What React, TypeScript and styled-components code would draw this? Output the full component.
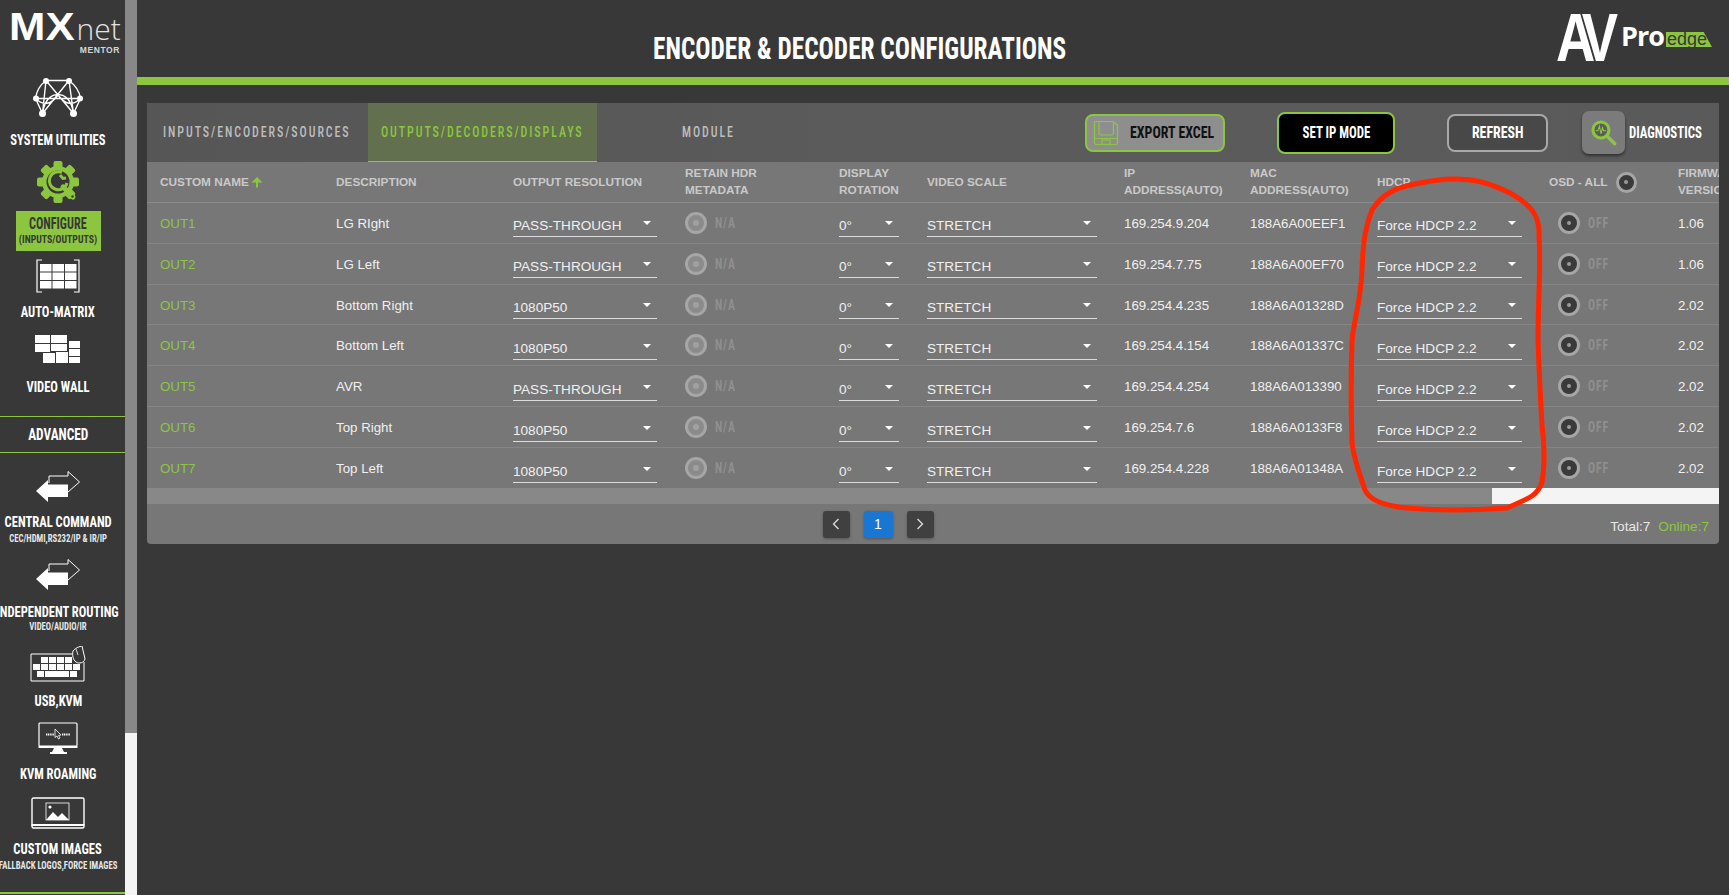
import { FC } from 'react';
import styled, { createGlobalStyle, css } from 'styled-components';

const GREEN = '#8cc63f';

const cond = css`
  font-family: Roboto, "Liberation Sans", sans-serif;
  font-stretch: 75%;
  font-weight: 700;
`;

const Global = createGlobalStyle`
  html, body { margin: 0; padding: 0; height: 100%; background: #383838; overflow: hidden; }
  body { font-family: "Liberation Sans", Arial, sans-serif; }
`;

const Page = styled.div`
  position: relative;
  display: flex;
  width: 1729px;
  height: 895px;
  overflow: hidden;
  background: #383838;
`;

const Sidebar = styled.nav`
  width: 125px;
  height: 895px;
  flex: none;
  overflow: hidden;
  display: flex;
  flex-direction: column;
`;

const ScrollTrack = styled.div`
  width: 12px;
  flex: none;
  background: #f4f4f4;
`;

const ScrollThumb = styled.div`
  height: 733px;
  background: #888888;
`;

const LogoBox = styled.div`
  height: 78px;
  flex: none;
  padding: 9px 0 0 9px;
  box-sizing: border-box;
  color: #fff;
`;

const LogoLine = styled.div`
  display: flex;
  align-items: baseline;
  line-height: 36px;
  height: 36px;
`;

const LogoMx = styled.span`
  font-size: 39px;
  font-weight: 700;
  display: inline-block;
  transform: scaleX(1.12);
  transform-origin: left;
  margin-right: 9px;
`;

const LogoNet = styled.span`
  font-family: "Open Sans", "Liberation Sans", sans-serif;
  font-weight: 300;
  font-size: 30px;
  line-height: 30px;
  color: #e2e2e2;
`;

const LogoSub = styled.div`
  font-size: 8.5px;
  font-weight: 700;
  letter-spacing: 0.6px;
  color: #d6d6d6;
  text-align: right;
  width: 111px;
  line-height: 8px;
  margin-top: 1px;
`;

const NavItem = styled.div<{ $top: number; $gap: number }>`
  display: flex;
  flex-direction: column;
  align-items: center;
  width: 116px;
  flex: none;
  margin-top: ${(p) => p.$top}px;
  row-gap: ${(p) => p.$gap}px;
`;

const NavText = styled.div`
  display: flex;
  flex-direction: column;
  align-items: center;
`;

const NavLabel = styled.div`
  ${cond}
  font-size: 15.5px;
  line-height: 16px;
  height: 16px;
  color: #fff;
  white-space: nowrap;
  transform: scaleX(0.81);
`;

const NavSub = styled.div<{ $mt: number }>`
  ${cond}
  font-size: 10px;
  line-height: 12px;
  color: #e6e6e6;
  white-space: nowrap;
  margin-top: ${(p) => p.$mt}px;
  transform: scaleX(0.87);
`;

const ConfigureBox = styled.div`
  ${cond}
  width: 85px;
  height: 40px;
  margin-top: 8px;
  background: ${GREEN};
  color: #383838;
  display: flex;
  flex-direction: column;
  align-items: center;
`;

const ConfigureTitle = styled.div`
  font-size: 16px;
  line-height: 16px;
  margin-top: 5px;
  transform: scaleX(0.76);
`;

const ConfigureSub = styled.div`
  font-size: 11px;
  line-height: 13px;
  margin-top: 1px;
  white-space: nowrap;
  transform: scaleX(0.89);
`;

const SectionHead = styled.div`
  flex: none;
  height: 37px;
  margin-top: 21px;
  box-sizing: border-box;
  border-top: 1px solid ${GREEN};
  border-bottom: 1px solid ${GREEN};
  display: flex;
  align-items: center;
  justify-content: center;
  padding-right: 9px;
`;

const SectionLabel = styled.span`
  ${cond}
  font-size: 16px;
  color: #fff;
  transform: scaleX(0.83);
`;

const EndLine = styled.div`
  flex: none;
  height: 2px;
  margin-top: 20px;
  background: ${GREEN};
`;

const Main = styled.main`
  flex: 1;
  min-width: 0;
  display: flex;
  flex-direction: column;
`;

const Header = styled.header`
  height: 77px;
  flex: none;
  display: flex;
  align-items: flex-start;
  justify-content: space-between;
  padding: 0 17px 0 516px;
`;

const Title = styled.h1`
  ${cond}
  margin: 29px 0 0;
  width: 415px;
  font-size: 32px;
  line-height: 38px;
  color: #fff;
  white-space: nowrap;
  transform: scaleX(0.79);
  transform-origin: left;
`;

const BrandLogo = styled.div`
  display: flex;
  align-items: flex-end;
  margin-top: 11px;
  height: 52px;
  color: #fff;
`;

const BrandAv = styled.span`
  font-family: "Liberation Sans", sans-serif;
  font-weight: 700;
  font-size: 68px;
  line-height: 52px;
  letter-spacing: -12px;
  width: 60px;
  margin-right: 5px;
  flex: none;
  transform: scaleX(0.8);
  transform-origin: left;
`;

const BrandPro = styled.span`
  font-family: "Open Sans", "Liberation Sans", sans-serif;
  font-weight: 700;
  font-size: 27px;
  line-height: 30px;
  letter-spacing: -1px;
  margin: 0 0 12px;
`;

const BrandEdge = styled.span`
  font-family: "Liberation Sans", sans-serif;
  font-size: 18px;
  line-height: 14px;
  height: 15px;
  width: 46px;
  margin: 0 0 16px 2px;
  padding-left: 1px;
  box-sizing: border-box;
  color: #383838;
  background: ${GREEN};
  clip-path: polygon(0 0, 82% 0, 100% 100%, 0 100%);
  overflow: hidden;
`;

const GreenBar = styled.div`
  height: 8px;
  flex: none;
  background: ${GREEN};
`;

const Panel = styled.section`
  margin: 18px 10px 0;
  height: 441px;
  display: flex;
  flex-direction: column;
  background: #777777;
  border-radius: 0 0 4px 4px;
  overflow: hidden;
`;

const TabBar = styled.div`
  height: 59px;
  flex: none;
  display: flex;
  align-items: stretch;
  background: linear-gradient(90deg, #565656, #5b5b5b 50%, #5a5a5a);
`;

const Tab = styled.div<{ $active?: boolean; $w: number; $pl: number }>`
  width: ${(p) => p.$w}px;
  flex: none;
  box-sizing: border-box;
  padding-left: ${(p) => p.$pl}px;
  display: flex;
  align-items: center;
  color: ${(p) => (p.$active ? GREEN : '#bdbdbd')};
  background: ${(p) => (p.$active ? '#63704f' : 'transparent')};
  border-bottom: 1px solid ${(p) => (p.$active ? GREEN : 'transparent')};
`;

const TabLabel = styled.span`
  ${cond}
  font-size: 15.5px;
  font-weight: 500;
  letter-spacing: 2.5px;
  white-space: nowrap;
  transform: scaleX(0.77);
  transform-origin: left;
`;

const Actions = styled.div`
  margin-left: auto;
  padding-right: 18px;
  display: flex;
  align-items: center;
  gap: 52px;
`;

const ActionButton = styled.button<{ $kind: 'export' | 'ip' | 'refresh' }>`
  box-sizing: border-box;
  display: flex;
  align-items: center;
  justify-content: ${(p) => (p.$kind === 'export' ? 'flex-start' : 'center')};
  padding: 0 0 0 ${(p) => (p.$kind === 'export' ? 6 : 0)}px;
  border-radius: 8px;
  border: 2px solid ${(p) => (p.$kind === 'refresh' ? '#a8a8a8' : GREEN)};
  width: ${(p) => (p.$kind === 'export' ? 140 : p.$kind === 'ip' ? 118 : 101)}px;
  height: ${(p) => (p.$kind === 'ip' ? 42 : 38)}px;
  color: ${(p) => (p.$kind === 'export' ? '#111' : '#fff')};
  background: ${(p) => (p.$kind === 'export' ? '#8e8e8e' : p.$kind === 'ip' ? '#000' : '#484848')};
  column-gap: 11px;
`;

const ButtonLabel = styled.span<{ $k: number; $left?: boolean }>`
  ${cond}
  flex: none;
  font-size: 16.5px;
  white-space: nowrap;
  transform: scaleX(${(p) => p.$k});
  transform-origin: ${(p) => (p.$left ? 'left' : 'center')};
`;

const DiskSvg = styled.svg`
  flex: none;
`;

const Diagnostics = styled.div`
  display: flex;
  align-items: center;
  column-gap: 4px;
  margin-left: -18px;
`;

const DiagnosticsLabel = styled.span`
  ${cond}
  width: 72px;
  font-size: 16px;
  color: #fff;
  white-space: nowrap;
  transform: scaleX(0.8);
  transform-origin: left;
`;

const DiagnosticsIcon = styled.div`
  width: 43px;
  height: 43px;
  border-radius: 7px;
  background: #7b7b7b;
  box-shadow: 0 2px 3px rgba(0, 0, 0, 0.45);
  display: flex;
  align-items: center;
  justify-content: center;
`;

const TableWrap = styled.div`
  flex: none;
  overflow: hidden;
`;

const cols = '176px 177px 172px 154px 88px 197px 126px 127px 172px 129px 100px';

const HeadRow = styled.div`
  display: grid;
  grid-template-columns: ${cols};
  height: 41px;
  box-sizing: border-box;
  padding-left: 13px;
  align-items: center;
  border-bottom: 1px solid #8a8a8a;
  width: 1700px;
`;

const HeadCell = styled.div`
  font-size: 11.8px;
  font-weight: 700;
  line-height: 17px;
  color: #c9c9c9;
  display: flex;
  align-items: center;
`;

const HeadStack = styled.div`
  font-size: 11.8px;
  font-weight: 700;
  line-height: 17px;
  color: #c9c9c9;
  white-space: nowrap;
`;

const Row = styled.div`
  display: grid;
  grid-template-columns: ${cols};
  height: 40.83px;
  box-sizing: border-box;
  padding-left: 13px;
  align-items: center;
  border-bottom: 1px solid #858585;
  width: 1700px;
  &:last-child { border-bottom: 0; }
`;

const Cell = styled.div<{ $green?: boolean }>`
  font-size: 13.3px;
  color: ${(p) => (p.$green ? GREEN : '#f0f0f0')};
  white-space: nowrap;
  margin-top: 1px;
`;

const Select = styled.div<{ $w: number }>`
  width: ${(p) => p.$w}px;
  height: 24px;
  margin-top: 5px;
  box-sizing: border-box;
  border-bottom: 1px solid #dcdcdc;
  display: flex;
  align-items: center;
  justify-content: space-between;
  padding: 2px 6px 0 0;
  font-size: 13.6px;
  color: #f0f0f0;
  white-space: nowrap;
`;

const Caret = styled.span`
  width: 0;
  height: 0;
  margin-top: -5px;
  border-left: 4.5px solid transparent;
  border-right: 4.5px solid transparent;
  border-top: 4.5px solid #fff;
`;

const RadioWrap = styled.div<{ $pl?: number }>`
  display: flex;
  align-items: center;
  column-gap: 8px;
  padding-left: ${(p) => p.$pl ?? 0}px;
`;

const Radio = styled.span<{ $off?: boolean }>`
  width: 22px;
  height: 22px;
  box-sizing: border-box;
  border-radius: 50%;
  border: 3px solid #a6a6a6;
  background: ${(p) => (p.$off ? '#8b8b8b' : '#3a3a3a')};
  display: flex;
  align-items: center;
  justify-content: center;
  flex: none;
  &::after {
    content: '';
    width: ${(p) => (p.$off ? 6 : 4)}px;
    height: ${(p) => (p.$off ? 6 : 4)}px;
    border-radius: 50%;
    background: ${(p) => (p.$off ? '#a0a0a0' : '#9a9a9a')};
  }
`;

const HeadRadio = styled(Radio)`
  width: 21px;
  height: 21px;
  margin-left: 8px;
`;

const RadioText = styled.span`
  ${cond}
  font-size: 15.5px;
  letter-spacing: 1.2px;
  color: #8f8f8f;
  transform: scaleX(0.76);
  transform-origin: left;
`;

const ScrollStrip = styled.div`
  flex: none;
  height: 16px;
  background: #f4f4f4;
  margin-top: -1px;
`;

const ScrollStripThumb = styled.div`
  width: 1345px;
  height: 16px;
  background: #888888;
`;

const Footer = styled.div`
  flex: 1;
  position: relative;
  display: flex;
  align-items: flex-start;
  justify-content: center;
  padding: 7px 110px 0 0;
  column-gap: 14px;
`;

const PageBtn = styled.div<{ $active?: boolean }>`
  width: ${(p) => (p.$active ? 29 : 27)}px;
  height: 27px;
  border-radius: 3px;
  background: ${(p) => (p.$active ? '#1976d2' : '#404040')};
  color: #fff;
  font-size: 14px;
  display: flex;
  align-items: center;
  justify-content: center;
  box-shadow: 0 1px 3px rgba(0, 0, 0, 0.3);
`;

const FooterTotals = styled.div`
  position: absolute;
  right: 10px;
  top: 15px;
  font-size: 13.6px;
  color: #e8e8e8;
  display: flex;
  column-gap: 8px;
`;

const GreenText = styled.span`
  color: ${GREEN};
`;

const Scribble = styled.svg`
  position: absolute;
  left: 1340px;
  top: 170px;
  pointer-events: none;
`;

const SortSvg = styled.svg`
  margin-left: 2.5px;
`;

const DomeIcon = () => (
  <svg width="50" height="40" viewBox="0 0 50 40" fill="none" stroke="#fff" strokeWidth="1.4">
    <path d="M13 2.5H36M13 2.5C7 7 3.5 13 2.5 20.5M36 2.5C42 7 46.5 13 47.5 20.5M2.5 20.5H47.5M2.5 20.5L9.5 35.5M47.5 20.5L40.5 35.5M13 2.5L40.5 35.5M36 2.5L9.5 35.5M13 2.5L9.5 35.5M36 2.5L40.5 35.5M9.5 35.5C12 18 22 16 25 17C28 16 38 18 40.5 35.5M2.5 20.5C10 28 18 27 25 17M47.5 20.5C40 28 32 27 25 17" />
    <g fill="#fff" stroke="none">
      <circle cx="13" cy="3" r="3" /><circle cx="36" cy="3" r="3" />
      <circle cx="3" cy="20.5" r="3" /><circle cx="47" cy="20.5" r="3" />
      <circle cx="9.5" cy="35.5" r="3.5" /><circle cx="40.5" cy="35.5" r="3.5" />
    </g>
  </svg>
);

const GearIcon = () => (
  <svg width="44" height="42" viewBox="0 0 44 42">
    <g fill={GREEN}>
      {[0, 45, 90, 135, 180, 225, 270, 315].map((a) => (
        <rect key={a} x="17.5" y="0" width="9" height="10" rx="2" transform={`rotate(${a} 22 21)`} />
      ))}
      <circle cx="22" cy="21" r="16" />
    </g>
    <circle cx="22" cy="21" r="11.5" fill="#383838" />
    <path d="M26 11.5A9 9 0 1 0 31 22" fill="none" stroke={GREEN} strokeWidth="3" />
    <path d="M24 14L27 17.5 30 17" fill="none" stroke={GREEN} strokeWidth="3" />
    <path d="M27 26L37 36" stroke={GREEN} strokeWidth="5" strokeLinecap="round" />
    <circle cx="36.5" cy="35.5" r="1.2" fill="#383838" />
  </svg>
);

const MatrixIcon = () => (
  <svg width="44" height="34" viewBox="0 0 44 34">
    <path d="M6 1H1V33H6M38 1H43V33H38" fill="none" stroke="#fff" strokeWidth="1.2" />
    {[0, 1, 2].map((r) =>
      [0, 1, 2].map((c) => <rect key={`${r}${c}`} x={4 + c * 12.5} y={5 + r * 8.5} width="11.5" height="7.5" fill="#fff" />),
    )}
  </svg>
);

const WallIcon = () => (
  <svg width="46" height="30" viewBox="0 0 46 30" fill="#fff">
    <rect x="0" y="0" width="15" height="8" /><rect x="16" y="0" width="16" height="8" />
    <rect x="0" y="9" width="15" height="8" /><rect x="16" y="9" width="16" height="7" />
    <rect x="34" y="6" width="11" height="7" /><rect x="34" y="14" width="11" height="7" />
    <rect x="8" y="18" width="12" height="10" /><rect x="21" y="17" width="12" height="11" /><rect x="34" y="22" width="11" height="6" />
  </svg>
);

const SwapIcon = () => (
  <svg width="46" height="33" viewBox="0 0 46 33">
    <path d="M14 13V6H33V1.5L44.5 12 33 22" fill="none" stroke="#fff" strokeWidth="1" />
    <path d="M1 21L13 10V14.5H33V27H13V32Z" fill="#fff" />
  </svg>
);

const KeyboardIcon = () => (
  <svg width="56" height="36" viewBox="0 0 56 36">
    <path d="M42 8H1V35H54V16" fill="none" stroke="#fff" strokeWidth="1" />
    <g fill="#fff">
      {[11, 19, 27, 35].map((x) => <rect key={x} x={x} y="11" width="7" height="6" />)}
      {[3, 11, 19, 27, 35, 43].map((x) => <rect key={x} x={x} y="18" width="7" height="6" />)}
      <rect x="7" y="25" width="7" height="6" /><rect x="15" y="25" width="24" height="6" /><rect x="40" y="25" width="7" height="6" />
    </g>
    <path d="M43 5C46 1 52 0 52 0L55 13C54 17 49 18 46 16 43 14 42 9 43 5Z" fill="#383838" stroke="#fff" strokeWidth="1" />
    <path d="M46 3L48 9" stroke="#fff" strokeWidth="0.8" />
  </svg>
);

const MonitorIcon = () => (
  <svg width="40" height="32" viewBox="0 0 40 32">
    <rect x="1" y="1" width="38" height="23" rx="1" fill="none" stroke="#fff" strokeWidth="1.2" />
    <path d="M0.5 24H39.5V26H24L26 30H29V32H12V30H14L16 26H0.5Z" fill="#fff" />
    <path d="M8 12.5H16M24 12.5H32" stroke="#fff" strokeWidth="2" strokeDasharray="1.2 0.6" />
    <path d="M17 7V15.5L19 14 20.5 17 22 16 20.5 13.5 23 13Z" fill="#383838" stroke="#fff" strokeWidth="0.8" />
  </svg>
);

const ImageIcon = () => (
  <svg width="54" height="33" viewBox="0 0 54 33">
    <rect x="1" y="1" width="52" height="30" rx="1.5" fill="none" stroke="#fff" strokeWidth="1.4" />
    <rect x="0.5" y="27" width="53" height="2" fill="#fff" />
    <rect x="15" y="6" width="23" height="17" fill="none" stroke="#fff" strokeWidth="0.8" />
    <circle cx="19" cy="10" r="1.6" fill="#fff" />
    <path d="M15 23L22 15 27 20 31 16 38 23Z" fill="#fff" />
  </svg>
);

const DiskIcon = () => (
  <DiskSvg width="26" height="26" viewBox="0 0 26 26" fill="none" stroke={GREEN} strokeWidth="1.2">
    <path d="M2 1.5H20L24.5 5V23C24.5 24 24 24.5 23 24.5H3C2 24.5 1.5 24 1.5 23V2C1.5 1.7 1.7 1.5 2 1.5Z" />
    <path d="M6 1.5V13.5C6 14.5 6.5 15 7.5 15H19C20 15 20.5 14.5 20.5 13.5V1.5M1.5 18.5H24.5" />
    <rect x="9" y="20" width="8" height="4.5" />
  </DiskSvg>
);

const DiagIcon = () => (
  <svg width="26" height="26" viewBox="0 0 34 34" fill="none">
    <circle cx="13" cy="13" r="10.5" stroke={GREEN} strokeWidth="4" fill="#5d5d5d" />
    <path d="M6 14H9L11 8 13 18 15 10 16.5 14H20" stroke={GREEN} strokeWidth="1.4" />
    <path d="M21 21L31 31" stroke={GREEN} strokeWidth="4.4" strokeLinecap="round" />
  </svg>
);

const Chevron = ({ left }: { left?: boolean }) => (
  <svg width="8" height="12" viewBox="0 0 8 12" fill="none" stroke="#ddd" strokeWidth="1.3">
    <path d={left ? 'M6.5 1L1.5 6 6.5 11' : 'M1.5 1L6.5 6 1.5 11'} />
  </svg>
);

const SortArrow = () => (
  <SortSvg width="12" height="12" viewBox="0 0 12 12">
    <path d="M6 1L11.5 6.5H7V11.5H5V6.5H.5Z" fill={GREEN} />
  </SortSvg>
);

const outs = [
  ['OUT1', 'LG RIght', 'PASS-THROUGH', '169.254.9.204', '188A6A00EEF1', '1.06'],
  ['OUT2', 'LG Left', 'PASS-THROUGH', '169.254.7.75', '188A6A00EF70', '1.06'],
  ['OUT3', 'Bottom Right', '1080P50', '169.254.4.235', '188A6A01328D', '2.02'],
  ['OUT4', 'Bottom Left', '1080P50', '169.254.4.154', '188A6A01337C', '2.02'],
  ['OUT5', 'AVR', 'PASS-THROUGH', '169.254.4.254', '188A6A013390', '2.02'],
  ['OUT6', 'Top Right', '1080P50', '169.254.7.6', '188A6A0133F8', '2.02'],
  ['OUT7', 'Top Left', '1080P50', '169.254.4.228', '188A6A01348A', '2.02'],
];

const scribblePath =
  'M113 9C135 9 150 13 170 23C190 34 200 45 199 65C201 100 198 130 198 170C199 200 200 220 202 255C205 280 205 295 202 312C198 325 190 328 167 338C140 340 100 341 67 338C45 336 30 331 25 320C20 305 14 290 12 273C11 240 11 200 12 170C14 150 21 130 22 100C23 70 26 55 32 40C42 24 55 18 75 14C90 11 100 9 113 9Z';

const PickOne: FC<{ value: string; width: number }> = ({ value, width }) => (
  <Select $w={width}>
    {value}
    <Caret />
  </Select>
);

const App: FC = () => {
  return (
    <Page>
      <Global />
      <Sidebar>
        <LogoBox>
          <LogoLine>
            <LogoMx>MX</LogoMx>
            <LogoNet>net</LogoNet>
          </LogoLine>
          <LogoSub>MENTOR</LogoSub>
        </LogoBox>
        <NavItem $top={0} $gap={14}>
          <DomeIcon />
          <NavLabel>SYSTEM UTILITIES</NavLabel>
        </NavItem>
        <NavItem $top={13} $gap={0}>
          <GearIcon />
          <ConfigureBox>
            <ConfigureTitle>CONFIGURE</ConfigureTitle>
            <ConfigureSub>(INPUTS/OUTPUTS)</ConfigureSub>
          </ConfigureBox>
        </NavItem>
        <NavItem $top={8} $gap={11}>
          <MatrixIcon />
          <NavLabel>AUTO-MATRIX</NavLabel>
        </NavItem>
        <NavItem $top={15} $gap={14}>
          <WallIcon />
          <NavLabel>VIDEO WALL</NavLabel>
        </NavItem>
        <SectionHead>
          <SectionLabel>ADVANCED</SectionLabel>
        </SectionHead>
        <NavItem $top={17} $gap={11}>
          <SwapIcon />
          <NavText>
            <NavLabel>CENTRAL COMMAND</NavLabel>
            <NavSub $mt={3}>CEC/HDMI,RS232/IP &amp; IR/IP</NavSub>
          </NavText>
        </NavItem>
        <NavItem $top={13} $gap={13}>
          <SwapIcon />
          <NavText>
            <NavLabel>INDEPENDENT ROUTING</NavLabel>
            <NavSub $mt={1}>VIDEO/AUDIO/IR</NavSub>
          </NavText>
        </NavItem>
        <NavItem $top={13} $gap={11}>
          <KeyboardIcon />
          <NavLabel>USB,KVM</NavLabel>
        </NavItem>
        <NavItem $top={13} $gap={12}>
          <MonitorIcon />
          <NavLabel>KVM ROAMING</NavLabel>
        </NavItem>
        <NavItem $top={15} $gap={11}>
          <ImageIcon />
          <NavText>
            <NavLabel>CUSTOM IMAGES</NavLabel>
            <NavSub $mt={3}>FALLBACK LOGOS,FORCE IMAGES</NavSub>
          </NavText>
        </NavItem>
        <EndLine />
      </Sidebar>
      <ScrollTrack>
        <ScrollThumb />
      </ScrollTrack>
      <Main>
        <Header>
          <Title>ENCODER &amp; DECODER CONFIGURATIONS</Title>
          <BrandLogo>
            <BrandAv>AV</BrandAv>
            <BrandPro>Pro</BrandPro>
            <BrandEdge>edge</BrandEdge>
          </BrandLogo>
        </Header>
        <GreenBar />
        <Panel>
          <TabBar>
            <Tab $w={221} $pl={16}><TabLabel>INPUTS/ENCODERS/SOURCES</TabLabel></Tab>
            <Tab $w={229} $pl={13} $active><TabLabel>OUTPUTS/DECODERS/DISPLAYS</TabLabel></Tab>
            <Tab $w={140} $pl={85}><TabLabel>MODULE</TabLabel></Tab>
            <Actions>
              <ActionButton $kind="export">
                <DiskIcon />
                <ButtonLabel $k={0.84} $left>EXPORT EXCEL</ButtonLabel>
              </ActionButton>
              <ActionButton $kind="ip">
                <ButtonLabel $k={0.78}>SET IP MODE</ButtonLabel>
              </ActionButton>
              <ActionButton $kind="refresh">
                <ButtonLabel $k={0.84}>REFRESH</ButtonLabel>
              </ActionButton>
              <Diagnostics>
                <DiagnosticsIcon>
                  <DiagIcon />
                </DiagnosticsIcon>
                <DiagnosticsLabel>DIAGNOSTICS</DiagnosticsLabel>
              </Diagnostics>
            </Actions>
          </TabBar>
          <TableWrap>
            <HeadRow>
              <HeadCell>CUSTOM NAME<SortArrow /></HeadCell>
              <HeadCell>DESCRIPTION</HeadCell>
              <HeadCell>OUTPUT RESOLUTION</HeadCell>
              <HeadStack>RETAIN HDR<br />METADATA</HeadStack>
              <HeadStack>DISPLAY<br />ROTATION</HeadStack>
              <HeadCell>VIDEO SCALE</HeadCell>
              <HeadStack>IP<br />ADDRESS(AUTO)</HeadStack>
              <HeadStack>MAC<br />ADDRESS(AUTO)</HeadStack>
              <HeadCell>HDCP</HeadCell>
              <HeadCell>
                OSD - ALL
                <HeadRadio />
              </HeadCell>
              <HeadStack>FIRMWARE<br />VERSION</HeadStack>
            </HeadRow>
            {outs.map((o) => (
              <Row key={o[0]}>
                <Cell $green>{o[0]}</Cell>
                <Cell>{o[1]}</Cell>
                <PickOne value={o[2]} width={144} />
                <RadioWrap>
                  <Radio $off />
                  <RadioText>N/A</RadioText>
                </RadioWrap>
                <PickOne value="0°" width={60} />
                <PickOne value="STRETCH" width={170} />
                <Cell>{o[3]}</Cell>
                <Cell>{o[4]}</Cell>
                <PickOne value="Force HDCP 2.2" width={145} />
                <RadioWrap $pl={9}>
                  <Radio />
                  <RadioText>OFF</RadioText>
                </RadioWrap>
                <Cell>{o[5]}</Cell>
              </Row>
            ))}
          </TableWrap>
          <ScrollStrip>
            <ScrollStripThumb />
          </ScrollStrip>
          <Footer>
            <PageBtn><Chevron left /></PageBtn>
            <PageBtn $active>1</PageBtn>
            <PageBtn><Chevron /></PageBtn>
            <FooterTotals>
              <span>Total:7</span>
              <GreenText>Online:7</GreenText>
            </FooterTotals>
          </Footer>
        </Panel>
      </Main>
      <Scribble width="215" height="350" viewBox="0 0 215 350">
        <path d={scribblePath} fill="none" stroke="#ff2600" strokeWidth="5" strokeLinejoin="round" />
      </Scribble>
    </Page>
  );
};

export default App;
